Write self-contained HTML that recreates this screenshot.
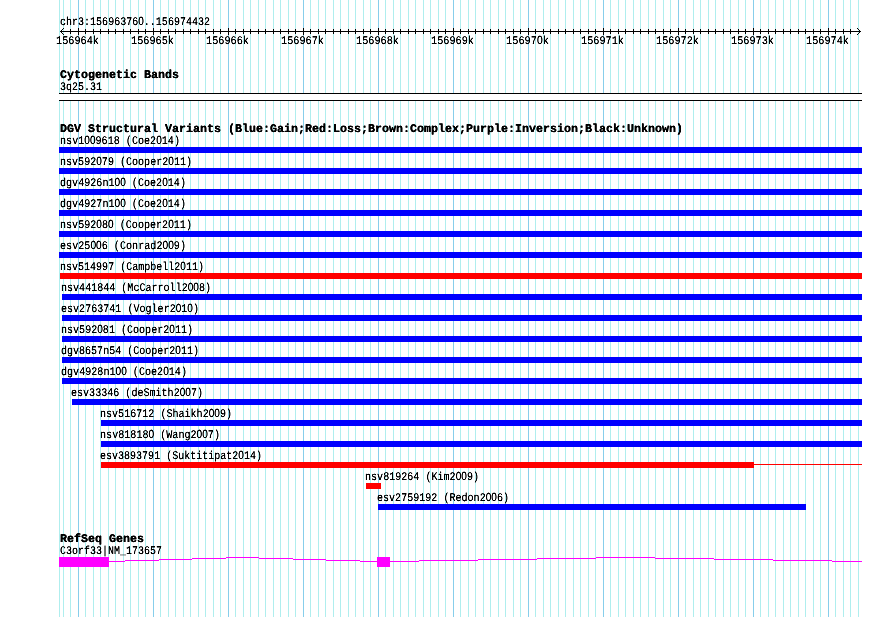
<!DOCTYPE html>
<html><head><meta charset="utf-8"><title>GBrowse</title>
<style>
html,body{margin:0;padding:0;background:#fff;}
body{width:890px;height:617px;overflow:hidden;}
svg{display:block;will-change:transform;text-rendering:geometricPrecision;}
.z{font-family:"Liberation Sans", sans-serif;}
text{font-family:"Liberation Mono", monospace;fill:#000;stroke:#000;stroke-width:0.08;}
</style></head>
<body>
<svg width="890" height="617" viewBox="0 0 890 617">
<defs><filter id="th" x="0" y="0" width="890" height="617" filterUnits="userSpaceOnUse" color-interpolation-filters="sRGB"><feComponentTransfer><feFuncA type="linear" slope="1.6" intercept="-0.15"/></feComponentTransfer></filter></defs>
<g shape-rendering="crispEdges">
<rect x="59" y="0" width="1" height="617" fill="#afeeee"/>
<rect x="63" y="0" width="1" height="617" fill="#afeeee"/>
<rect x="70" y="0" width="1" height="617" fill="#afeeee"/>
<rect x="78" y="0" width="1" height="617" fill="#87ceeb"/>
<rect x="85" y="0" width="1" height="617" fill="#afeeee"/>
<rect x="93" y="0" width="1" height="617" fill="#afeeee"/>
<rect x="100" y="0" width="1" height="617" fill="#afeeee"/>
<rect x="108" y="0" width="1" height="617" fill="#afeeee"/>
<rect x="115" y="0" width="1" height="617" fill="#afeeee"/>
<rect x="123" y="0" width="1" height="617" fill="#afeeee"/>
<rect x="130" y="0" width="1" height="617" fill="#afeeee"/>
<rect x="138" y="0" width="1" height="617" fill="#afeeee"/>
<rect x="145" y="0" width="1" height="617" fill="#afeeee"/>
<rect x="153" y="0" width="1" height="617" fill="#87ceeb"/>
<rect x="160" y="0" width="1" height="617" fill="#afeeee"/>
<rect x="168" y="0" width="1" height="617" fill="#afeeee"/>
<rect x="175" y="0" width="1" height="617" fill="#afeeee"/>
<rect x="183" y="0" width="1" height="617" fill="#afeeee"/>
<rect x="190" y="0" width="1" height="617" fill="#afeeee"/>
<rect x="198" y="0" width="1" height="617" fill="#afeeee"/>
<rect x="205" y="0" width="1" height="617" fill="#afeeee"/>
<rect x="213" y="0" width="1" height="617" fill="#afeeee"/>
<rect x="220" y="0" width="1" height="617" fill="#afeeee"/>
<rect x="228" y="0" width="1" height="617" fill="#87ceeb"/>
<rect x="235" y="0" width="1" height="617" fill="#afeeee"/>
<rect x="243" y="0" width="1" height="617" fill="#afeeee"/>
<rect x="250" y="0" width="1" height="617" fill="#afeeee"/>
<rect x="258" y="0" width="1" height="617" fill="#afeeee"/>
<rect x="265" y="0" width="1" height="617" fill="#afeeee"/>
<rect x="273" y="0" width="1" height="617" fill="#afeeee"/>
<rect x="280" y="0" width="1" height="617" fill="#afeeee"/>
<rect x="288" y="0" width="1" height="617" fill="#afeeee"/>
<rect x="295" y="0" width="1" height="617" fill="#afeeee"/>
<rect x="303" y="0" width="1" height="617" fill="#87ceeb"/>
<rect x="310" y="0" width="1" height="617" fill="#afeeee"/>
<rect x="318" y="0" width="1" height="617" fill="#afeeee"/>
<rect x="325" y="0" width="1" height="617" fill="#afeeee"/>
<rect x="333" y="0" width="1" height="617" fill="#afeeee"/>
<rect x="340" y="0" width="1" height="617" fill="#afeeee"/>
<rect x="348" y="0" width="1" height="617" fill="#afeeee"/>
<rect x="355" y="0" width="1" height="617" fill="#afeeee"/>
<rect x="363" y="0" width="1" height="617" fill="#afeeee"/>
<rect x="370" y="0" width="1" height="617" fill="#afeeee"/>
<rect x="378" y="0" width="1" height="617" fill="#87ceeb"/>
<rect x="385" y="0" width="1" height="617" fill="#afeeee"/>
<rect x="393" y="0" width="1" height="617" fill="#afeeee"/>
<rect x="400" y="0" width="1" height="617" fill="#afeeee"/>
<rect x="408" y="0" width="1" height="617" fill="#afeeee"/>
<rect x="415" y="0" width="1" height="617" fill="#afeeee"/>
<rect x="423" y="0" width="1" height="617" fill="#afeeee"/>
<rect x="430" y="0" width="1" height="617" fill="#afeeee"/>
<rect x="438" y="0" width="1" height="617" fill="#afeeee"/>
<rect x="445" y="0" width="1" height="617" fill="#afeeee"/>
<rect x="453" y="0" width="1" height="617" fill="#87ceeb"/>
<rect x="460" y="0" width="1" height="617" fill="#afeeee"/>
<rect x="468" y="0" width="1" height="617" fill="#afeeee"/>
<rect x="475" y="0" width="1" height="617" fill="#afeeee"/>
<rect x="483" y="0" width="1" height="617" fill="#afeeee"/>
<rect x="490" y="0" width="1" height="617" fill="#afeeee"/>
<rect x="498" y="0" width="1" height="617" fill="#afeeee"/>
<rect x="505" y="0" width="1" height="617" fill="#afeeee"/>
<rect x="513" y="0" width="1" height="617" fill="#afeeee"/>
<rect x="520" y="0" width="1" height="617" fill="#afeeee"/>
<rect x="528" y="0" width="1" height="617" fill="#87ceeb"/>
<rect x="535" y="0" width="1" height="617" fill="#afeeee"/>
<rect x="543" y="0" width="1" height="617" fill="#afeeee"/>
<rect x="550" y="0" width="1" height="617" fill="#afeeee"/>
<rect x="558" y="0" width="1" height="617" fill="#afeeee"/>
<rect x="565" y="0" width="1" height="617" fill="#afeeee"/>
<rect x="573" y="0" width="1" height="617" fill="#afeeee"/>
<rect x="580" y="0" width="1" height="617" fill="#afeeee"/>
<rect x="588" y="0" width="1" height="617" fill="#afeeee"/>
<rect x="595" y="0" width="1" height="617" fill="#afeeee"/>
<rect x="603" y="0" width="1" height="617" fill="#87ceeb"/>
<rect x="610" y="0" width="1" height="617" fill="#afeeee"/>
<rect x="618" y="0" width="1" height="617" fill="#afeeee"/>
<rect x="625" y="0" width="1" height="617" fill="#afeeee"/>
<rect x="633" y="0" width="1" height="617" fill="#afeeee"/>
<rect x="640" y="0" width="1" height="617" fill="#afeeee"/>
<rect x="648" y="0" width="1" height="617" fill="#afeeee"/>
<rect x="655" y="0" width="1" height="617" fill="#afeeee"/>
<rect x="663" y="0" width="1" height="617" fill="#afeeee"/>
<rect x="670" y="0" width="1" height="617" fill="#afeeee"/>
<rect x="678" y="0" width="1" height="617" fill="#87ceeb"/>
<rect x="685" y="0" width="1" height="617" fill="#afeeee"/>
<rect x="693" y="0" width="1" height="617" fill="#afeeee"/>
<rect x="700" y="0" width="1" height="617" fill="#afeeee"/>
<rect x="708" y="0" width="1" height="617" fill="#afeeee"/>
<rect x="715" y="0" width="1" height="617" fill="#afeeee"/>
<rect x="723" y="0" width="1" height="617" fill="#afeeee"/>
<rect x="730" y="0" width="1" height="617" fill="#afeeee"/>
<rect x="738" y="0" width="1" height="617" fill="#afeeee"/>
<rect x="745" y="0" width="1" height="617" fill="#afeeee"/>
<rect x="753" y="0" width="1" height="617" fill="#87ceeb"/>
<rect x="760" y="0" width="1" height="617" fill="#afeeee"/>
<rect x="768" y="0" width="1" height="617" fill="#afeeee"/>
<rect x="775" y="0" width="1" height="617" fill="#afeeee"/>
<rect x="783" y="0" width="1" height="617" fill="#afeeee"/>
<rect x="790" y="0" width="1" height="617" fill="#afeeee"/>
<rect x="798" y="0" width="1" height="617" fill="#afeeee"/>
<rect x="805" y="0" width="1" height="617" fill="#afeeee"/>
<rect x="813" y="0" width="1" height="617" fill="#afeeee"/>
<rect x="820" y="0" width="1" height="617" fill="#afeeee"/>
<rect x="828" y="0" width="1" height="617" fill="#87ceeb"/>
<rect x="835" y="0" width="1" height="617" fill="#afeeee"/>
<rect x="843" y="0" width="1" height="617" fill="#afeeee"/>
<rect x="850" y="0" width="1" height="617" fill="#afeeee"/>
<rect x="858" y="0" width="1" height="617" fill="#afeeee"/>
<rect x="60" y="31" width="801" height="1" fill="#000"/>
<rect x="70" y="29" width="1" height="5" fill="#000"/>
<rect x="78" y="28" width="1" height="7" fill="#000"/>
<rect x="85" y="29" width="1" height="5" fill="#000"/>
<rect x="93" y="29" width="1" height="5" fill="#000"/>
<rect x="100" y="29" width="1" height="5" fill="#000"/>
<rect x="108" y="29" width="1" height="5" fill="#000"/>
<rect x="115" y="29" width="1" height="5" fill="#000"/>
<rect x="123" y="29" width="1" height="5" fill="#000"/>
<rect x="130" y="29" width="1" height="5" fill="#000"/>
<rect x="138" y="29" width="1" height="5" fill="#000"/>
<rect x="145" y="29" width="1" height="5" fill="#000"/>
<rect x="153" y="28" width="1" height="7" fill="#000"/>
<rect x="160" y="29" width="1" height="5" fill="#000"/>
<rect x="168" y="29" width="1" height="5" fill="#000"/>
<rect x="175" y="29" width="1" height="5" fill="#000"/>
<rect x="183" y="29" width="1" height="5" fill="#000"/>
<rect x="190" y="29" width="1" height="5" fill="#000"/>
<rect x="198" y="29" width="1" height="5" fill="#000"/>
<rect x="205" y="29" width="1" height="5" fill="#000"/>
<rect x="213" y="29" width="1" height="5" fill="#000"/>
<rect x="220" y="29" width="1" height="5" fill="#000"/>
<rect x="228" y="28" width="1" height="7" fill="#000"/>
<rect x="235" y="29" width="1" height="5" fill="#000"/>
<rect x="243" y="29" width="1" height="5" fill="#000"/>
<rect x="250" y="29" width="1" height="5" fill="#000"/>
<rect x="258" y="29" width="1" height="5" fill="#000"/>
<rect x="265" y="29" width="1" height="5" fill="#000"/>
<rect x="273" y="29" width="1" height="5" fill="#000"/>
<rect x="280" y="29" width="1" height="5" fill="#000"/>
<rect x="288" y="29" width="1" height="5" fill="#000"/>
<rect x="295" y="29" width="1" height="5" fill="#000"/>
<rect x="303" y="28" width="1" height="7" fill="#000"/>
<rect x="310" y="29" width="1" height="5" fill="#000"/>
<rect x="318" y="29" width="1" height="5" fill="#000"/>
<rect x="325" y="29" width="1" height="5" fill="#000"/>
<rect x="333" y="29" width="1" height="5" fill="#000"/>
<rect x="340" y="29" width="1" height="5" fill="#000"/>
<rect x="348" y="29" width="1" height="5" fill="#000"/>
<rect x="355" y="29" width="1" height="5" fill="#000"/>
<rect x="363" y="29" width="1" height="5" fill="#000"/>
<rect x="370" y="29" width="1" height="5" fill="#000"/>
<rect x="378" y="28" width="1" height="7" fill="#000"/>
<rect x="385" y="29" width="1" height="5" fill="#000"/>
<rect x="393" y="29" width="1" height="5" fill="#000"/>
<rect x="400" y="29" width="1" height="5" fill="#000"/>
<rect x="408" y="29" width="1" height="5" fill="#000"/>
<rect x="415" y="29" width="1" height="5" fill="#000"/>
<rect x="423" y="29" width="1" height="5" fill="#000"/>
<rect x="430" y="29" width="1" height="5" fill="#000"/>
<rect x="438" y="29" width="1" height="5" fill="#000"/>
<rect x="445" y="29" width="1" height="5" fill="#000"/>
<rect x="453" y="28" width="1" height="7" fill="#000"/>
<rect x="460" y="29" width="1" height="5" fill="#000"/>
<rect x="468" y="29" width="1" height="5" fill="#000"/>
<rect x="475" y="29" width="1" height="5" fill="#000"/>
<rect x="483" y="29" width="1" height="5" fill="#000"/>
<rect x="490" y="29" width="1" height="5" fill="#000"/>
<rect x="498" y="29" width="1" height="5" fill="#000"/>
<rect x="505" y="29" width="1" height="5" fill="#000"/>
<rect x="513" y="29" width="1" height="5" fill="#000"/>
<rect x="520" y="29" width="1" height="5" fill="#000"/>
<rect x="528" y="28" width="1" height="7" fill="#000"/>
<rect x="535" y="29" width="1" height="5" fill="#000"/>
<rect x="543" y="29" width="1" height="5" fill="#000"/>
<rect x="550" y="29" width="1" height="5" fill="#000"/>
<rect x="558" y="29" width="1" height="5" fill="#000"/>
<rect x="565" y="29" width="1" height="5" fill="#000"/>
<rect x="573" y="29" width="1" height="5" fill="#000"/>
<rect x="580" y="29" width="1" height="5" fill="#000"/>
<rect x="588" y="29" width="1" height="5" fill="#000"/>
<rect x="595" y="29" width="1" height="5" fill="#000"/>
<rect x="603" y="28" width="1" height="7" fill="#000"/>
<rect x="610" y="29" width="1" height="5" fill="#000"/>
<rect x="618" y="29" width="1" height="5" fill="#000"/>
<rect x="625" y="29" width="1" height="5" fill="#000"/>
<rect x="633" y="29" width="1" height="5" fill="#000"/>
<rect x="640" y="29" width="1" height="5" fill="#000"/>
<rect x="648" y="29" width="1" height="5" fill="#000"/>
<rect x="655" y="29" width="1" height="5" fill="#000"/>
<rect x="663" y="29" width="1" height="5" fill="#000"/>
<rect x="670" y="29" width="1" height="5" fill="#000"/>
<rect x="678" y="28" width="1" height="7" fill="#000"/>
<rect x="685" y="29" width="1" height="5" fill="#000"/>
<rect x="693" y="29" width="1" height="5" fill="#000"/>
<rect x="700" y="29" width="1" height="5" fill="#000"/>
<rect x="708" y="29" width="1" height="5" fill="#000"/>
<rect x="715" y="29" width="1" height="5" fill="#000"/>
<rect x="723" y="29" width="1" height="5" fill="#000"/>
<rect x="730" y="29" width="1" height="5" fill="#000"/>
<rect x="738" y="29" width="1" height="5" fill="#000"/>
<rect x="745" y="29" width="1" height="5" fill="#000"/>
<rect x="753" y="28" width="1" height="7" fill="#000"/>
<rect x="760" y="29" width="1" height="5" fill="#000"/>
<rect x="768" y="29" width="1" height="5" fill="#000"/>
<rect x="775" y="29" width="1" height="5" fill="#000"/>
<rect x="783" y="29" width="1" height="5" fill="#000"/>
<rect x="790" y="29" width="1" height="5" fill="#000"/>
<rect x="798" y="29" width="1" height="5" fill="#000"/>
<rect x="805" y="29" width="1" height="5" fill="#000"/>
<rect x="813" y="29" width="1" height="5" fill="#000"/>
<rect x="820" y="29" width="1" height="5" fill="#000"/>
<rect x="828" y="28" width="1" height="7" fill="#000"/>
<rect x="835" y="29" width="1" height="5" fill="#000"/>
<rect x="843" y="29" width="1" height="5" fill="#000"/>
<rect x="850" y="29" width="1" height="5" fill="#000"/>
<rect x="60" y="31" width="1" height="1" fill="#000"/>
<rect x="60" y="31" width="1" height="1" fill="#000"/>
<rect x="860" y="31" width="1" height="1" fill="#000"/>
<rect x="860" y="31" width="1" height="1" fill="#000"/>
<rect x="61" y="30" width="1" height="1" fill="#000"/>
<rect x="61" y="32" width="1" height="1" fill="#000"/>
<rect x="859" y="30" width="1" height="1" fill="#000"/>
<rect x="859" y="32" width="1" height="1" fill="#000"/>
<rect x="62" y="29" width="1" height="1" fill="#000"/>
<rect x="62" y="33" width="1" height="1" fill="#000"/>
<rect x="858" y="29" width="1" height="1" fill="#000"/>
<rect x="858" y="33" width="1" height="1" fill="#000"/>
<rect x="63" y="28" width="1" height="1" fill="#000"/>
<rect x="63" y="34" width="1" height="1" fill="#000"/>
<rect x="857" y="28" width="1" height="1" fill="#000"/>
<rect x="857" y="34" width="1" height="1" fill="#000"/>
<rect x="59" y="93" width="803" height="8" fill="#fff"/>
<rect x="59" y="93" width="803" height="1" fill="#000"/>
<rect x="59" y="100" width="803" height="1" fill="#000"/>
<rect x="59" y="147" width="803" height="6" fill="#0000ff"/>
<rect x="59" y="168" width="803" height="6" fill="#0000ff"/>
<rect x="59" y="189" width="803" height="6" fill="#0000ff"/>
<rect x="59" y="210" width="803" height="6" fill="#0000ff"/>
<rect x="59" y="231" width="803" height="6" fill="#0000ff"/>
<rect x="59" y="252" width="803" height="6" fill="#0000ff"/>
<rect x="60" y="273" width="802" height="6" fill="#ff0000"/>
<rect x="62" y="294" width="800" height="6" fill="#0000ff"/>
<rect x="62" y="315" width="800" height="6" fill="#0000ff"/>
<rect x="62" y="336" width="800" height="6" fill="#0000ff"/>
<rect x="62" y="357" width="800" height="6" fill="#0000ff"/>
<rect x="62" y="378" width="800" height="6" fill="#0000ff"/>
<rect x="72" y="399" width="790" height="6" fill="#0000ff"/>
<rect x="101" y="420" width="761" height="6" fill="#0000ff"/>
<rect x="101" y="441" width="761" height="6" fill="#0000ff"/>
<rect x="101" y="462" width="653" height="6" fill="#ff0000"/>
<rect x="366" y="483" width="15" height="6" fill="#ff0000"/>
<rect x="378" y="504" width="428" height="6" fill="#0000ff"/>
<rect x="754" y="464" width="108" height="1" fill="#ff0000"/>
<rect x="59" y="557" width="50" height="10" fill="#ff00ff"/>
<rect x="377" y="557" width="13" height="10" fill="#ff00ff"/>
<rect x="109" y="561" width="16" height="1" fill="#ff00ff"/>
<rect x="125" y="560" width="34" height="1" fill="#ff00ff"/>
<rect x="159" y="559" width="33" height="1" fill="#ff00ff"/>
<rect x="192" y="558" width="34" height="1" fill="#ff00ff"/>
<rect x="226" y="557" width="33" height="1" fill="#ff00ff"/>
<rect x="259" y="558" width="34" height="1" fill="#ff00ff"/>
<rect x="293" y="559" width="33" height="1" fill="#ff00ff"/>
<rect x="326" y="560" width="34" height="1" fill="#ff00ff"/>
<rect x="360" y="561" width="17" height="1" fill="#ff00ff"/>
<rect x="390" y="561" width="29" height="1" fill="#ff00ff"/>
<rect x="419" y="560" width="59" height="1" fill="#ff00ff"/>
<rect x="478" y="559" width="59" height="1" fill="#ff00ff"/>
<rect x="537" y="558" width="59" height="1" fill="#ff00ff"/>
<rect x="596" y="557" width="59" height="1" fill="#ff00ff"/>
<rect x="655" y="558" width="59" height="1" fill="#ff00ff"/>
<rect x="714" y="559" width="59" height="1" fill="#ff00ff"/>
<rect x="773" y="560" width="59" height="1" fill="#ff00ff"/>
<rect x="832" y="561" width="30" height="1" fill="#ff00ff"/>
</g>
<g filter="url(#th)">
<text x="60" y="25" font-size="11.7" textLength="150" lengthAdjust="spacingAndGlyphs">chr3:15696376<tspan class="z">0</tspan>..156974432</text>
<text x="56" y="44" font-size="11.7" textLength="43" lengthAdjust="spacingAndGlyphs">156964k</text>
<text x="131" y="44" font-size="11.7" textLength="43" lengthAdjust="spacingAndGlyphs">156965k</text>
<text x="206" y="44" font-size="11.7" textLength="43" lengthAdjust="spacingAndGlyphs">156966k</text>
<text x="281" y="44" font-size="11.7" textLength="43" lengthAdjust="spacingAndGlyphs">156967k</text>
<text x="356" y="44" font-size="11.7" textLength="43" lengthAdjust="spacingAndGlyphs">156968k</text>
<text x="431" y="44" font-size="11.7" textLength="43" lengthAdjust="spacingAndGlyphs">156969k</text>
<text x="506" y="44" font-size="11.7" textLength="43" lengthAdjust="spacingAndGlyphs">15697<tspan class="z">0</tspan>k</text>
<text x="581" y="44" font-size="11.7" textLength="43" lengthAdjust="spacingAndGlyphs">156971k</text>
<text x="656" y="44" font-size="11.7" textLength="43" lengthAdjust="spacingAndGlyphs">156972k</text>
<text x="731" y="44" font-size="11.7" textLength="43" lengthAdjust="spacingAndGlyphs">156973k</text>
<text x="806" y="44" font-size="11.7" textLength="43" lengthAdjust="spacingAndGlyphs">156974k</text>
<text x="60" y="78" font-size="11.7" font-weight="bold" style="stroke-width:0.2px" textLength="119" lengthAdjust="spacingAndGlyphs">Cytogenetic Bands</text>
<text x="60" y="90" font-size="11.7" textLength="42" lengthAdjust="spacingAndGlyphs">3q25.31</text>
<text x="60" y="132" font-size="11.7" font-weight="bold" style="stroke-width:0.2px" textLength="623" lengthAdjust="spacingAndGlyphs">DGV Structural Variants (Blue:Gain;Red:Loss;Brown:Complex;Purple:Inversion;Black:Unknown)</text>
<text x="60" y="144" font-size="11.7" textLength="120" lengthAdjust="spacingAndGlyphs">nsv1<tspan class="z">0</tspan><tspan class="z">0</tspan>9618 (Coe2<tspan class="z">0</tspan>14)</text>
<text x="60" y="165" font-size="11.7" textLength="132" lengthAdjust="spacingAndGlyphs">nsv592<tspan class="z">0</tspan>79 (Cooper2<tspan class="z">0</tspan>11)</text>
<text x="60" y="186" font-size="11.7" textLength="126" lengthAdjust="spacingAndGlyphs">dgv4926n1<tspan class="z">0</tspan><tspan class="z">0</tspan> (Coe2<tspan class="z">0</tspan>14)</text>
<text x="60" y="207" font-size="11.7" textLength="126" lengthAdjust="spacingAndGlyphs">dgv4927n1<tspan class="z">0</tspan><tspan class="z">0</tspan> (Coe2<tspan class="z">0</tspan>14)</text>
<text x="60" y="228" font-size="11.7" textLength="132" lengthAdjust="spacingAndGlyphs">nsv592<tspan class="z">0</tspan>8<tspan class="z">0</tspan> (Cooper2<tspan class="z">0</tspan>11)</text>
<text x="60" y="249" font-size="11.7" textLength="126" lengthAdjust="spacingAndGlyphs">esv25<tspan class="z">0</tspan><tspan class="z">0</tspan>6 (Conrad2<tspan class="z">0</tspan><tspan class="z">0</tspan>9)</text>
<text x="60" y="270" font-size="11.7" textLength="144" lengthAdjust="spacingAndGlyphs">nsv514997 (Campbell2<tspan class="z">0</tspan>11)</text>
<text x="61" y="291" font-size="11.7" textLength="150" lengthAdjust="spacingAndGlyphs">nsv441844 (McCarroll2<tspan class="z">0</tspan><tspan class="z">0</tspan>8)</text>
<text x="61" y="312" font-size="11.7" textLength="138" lengthAdjust="spacingAndGlyphs">esv2763741 (Vogler2<tspan class="z">0</tspan>1<tspan class="z">0</tspan>)</text>
<text x="61" y="333" font-size="11.7" textLength="132" lengthAdjust="spacingAndGlyphs">nsv592<tspan class="z">0</tspan>81 (Cooper2<tspan class="z">0</tspan>11)</text>
<text x="61" y="354" font-size="11.7" textLength="138" lengthAdjust="spacingAndGlyphs">dgv8657n54 (Cooper2<tspan class="z">0</tspan>11)</text>
<text x="61" y="375" font-size="11.7" textLength="126" lengthAdjust="spacingAndGlyphs">dgv4928n1<tspan class="z">0</tspan><tspan class="z">0</tspan> (Coe2<tspan class="z">0</tspan>14)</text>
<text x="71" y="396" font-size="11.7" textLength="132" lengthAdjust="spacingAndGlyphs">esv33346 (deSmith2<tspan class="z">0</tspan><tspan class="z">0</tspan>7)</text>
<text x="100" y="417" font-size="11.7" textLength="132" lengthAdjust="spacingAndGlyphs">nsv516712 (Shaikh2<tspan class="z">0</tspan><tspan class="z">0</tspan>9)</text>
<text x="100" y="438" font-size="11.7" textLength="120" lengthAdjust="spacingAndGlyphs">nsv81818<tspan class="z">0</tspan> (Wang2<tspan class="z">0</tspan><tspan class="z">0</tspan>7)</text>
<text x="100" y="459" font-size="11.7" textLength="162" lengthAdjust="spacingAndGlyphs">esv3893791 (Suktitipat2<tspan class="z">0</tspan>14)</text>
<text x="365" y="480" font-size="11.7" textLength="114" lengthAdjust="spacingAndGlyphs">nsv819264 (Kim2<tspan class="z">0</tspan><tspan class="z">0</tspan>9)</text>
<text x="377" y="501" font-size="11.7" textLength="132" lengthAdjust="spacingAndGlyphs">esv2759192 (Redon2<tspan class="z">0</tspan><tspan class="z">0</tspan>6)</text>
<text x="60" y="542" font-size="11.7" font-weight="bold" style="stroke-width:0.2px" textLength="84" lengthAdjust="spacingAndGlyphs">RefSeq Genes</text>
<text x="60" y="554" font-size="11.7" textLength="102" lengthAdjust="spacingAndGlyphs">C3orf33|NM_173657</text>
</g>
</svg>
</body></html>
